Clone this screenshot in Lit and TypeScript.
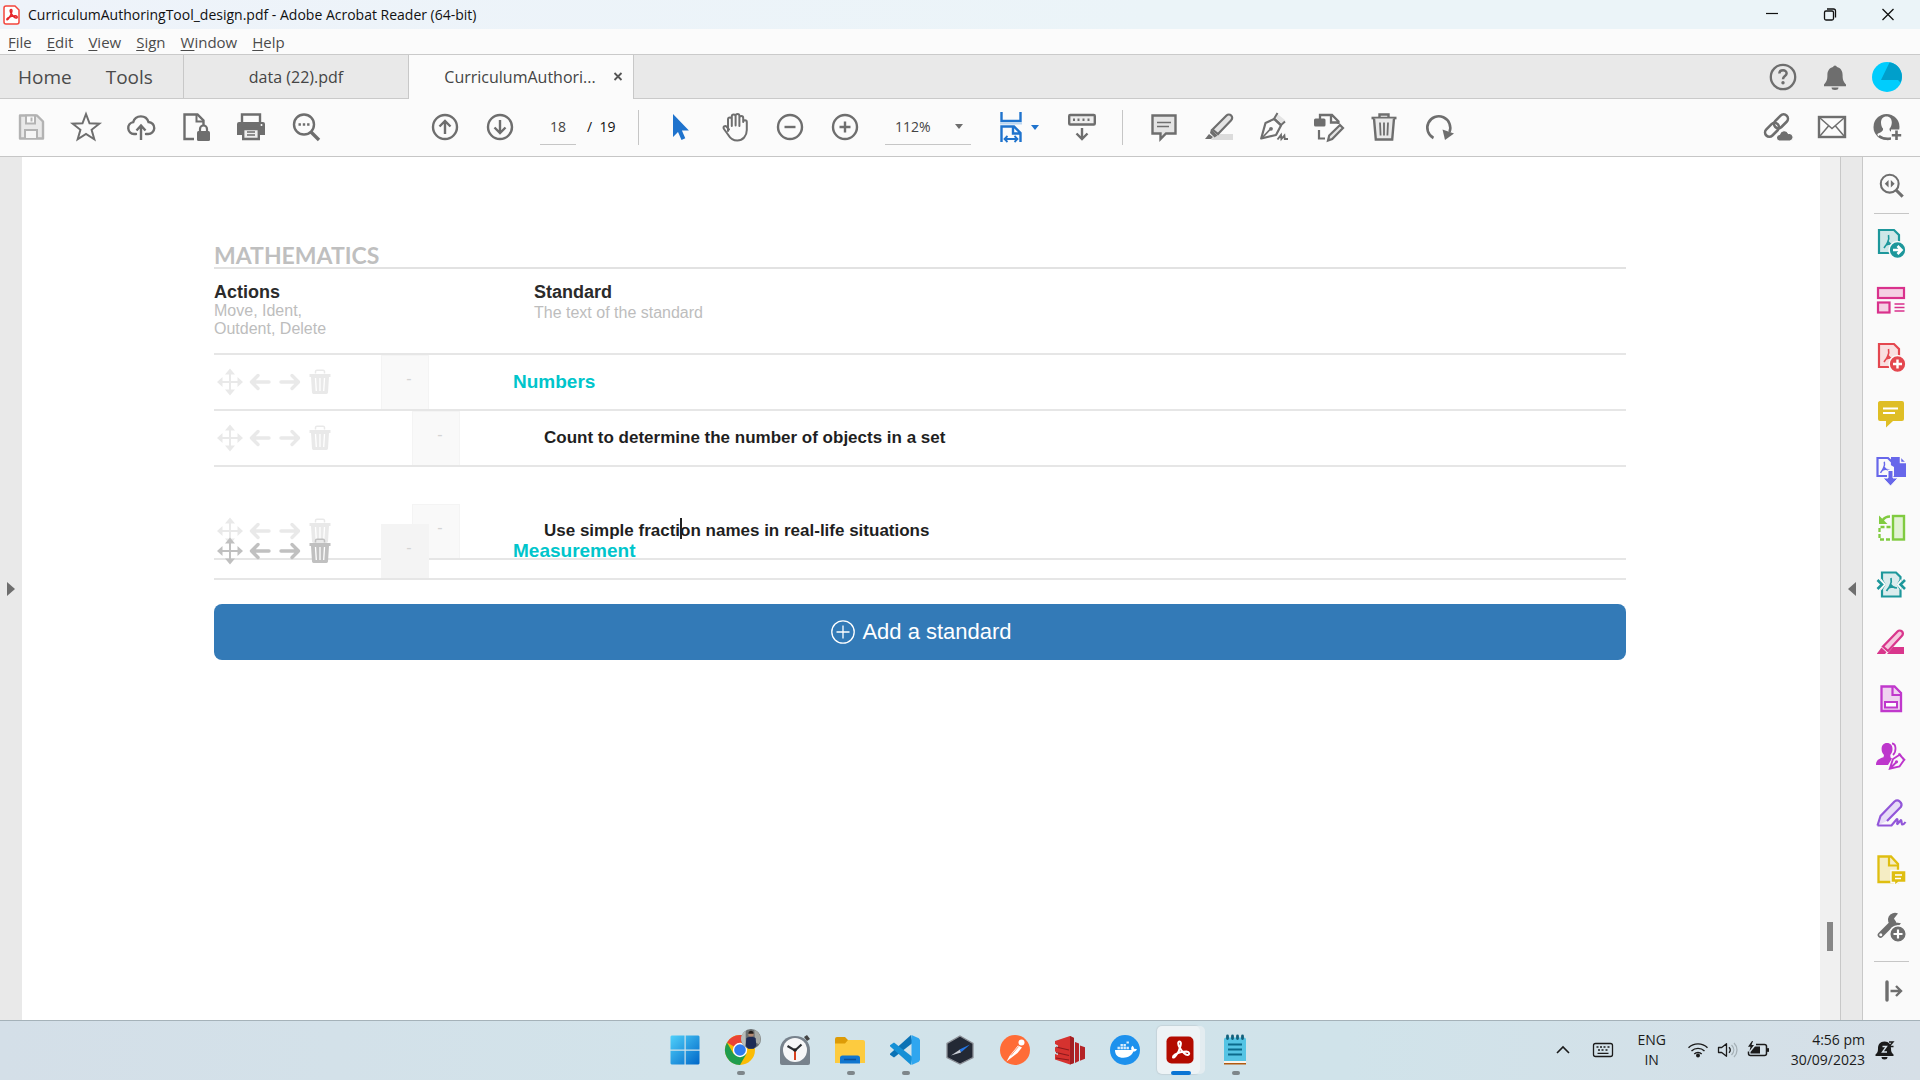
import { LitElement, html, svg, css, TemplateResult } from "lit";
import { customElement } from "lit/decorators.js";
import { classMap } from "lit/directives/class-map.js";

const icon = (body: TemplateResult, size = "i30") =>
  html`<svg class="ico ${size}" viewBox="0 0 30 30" aria-hidden="true">${body}</svg>`;

// The three-lobed Acrobat mark, drawn inside a 30 unit box.
const LOBES =
  "M14.5 7.5c-1.6 0-1.4 2.400 0 4.700s4.200 6 6.300 6 1.700-2.700-.8-2.800c-3 0-6.800.9-9.300 2.600s-1.700 3.500.3 1.300c1.800-2 3.900-6.700 4.400-9.200.3-1.600 0-2.600-.9-2.600z";

// Open three-armed form of the mark, used at small sizes.
const ARMS = "M14.500 8c.8 3 .2 5-1 7.500S11 19.500 10 21M13.800 14c1 2 3 3.600 6.700 4M12 18c2-1 4.500-1.300 6-1";

const G = "#6e6e6e";

const I: Record<string, TemplateResult> = {
  save: svg`<path d="M4 3.500h17l6 6v17H4z" fill="#e9e9e9" stroke="#b3b3b3" stroke-width="2.400" stroke-linejoin="round"/><path d="M10 3.500h9v8h-9z" fill="#fbfbfb" stroke="#b3b3b3" stroke-width="2"/><path d="M15.500 5.500v4" stroke="#b3b3b3" stroke-width="2"/><path d="M9 26v-8h12v8" fill="#f6f6f6" stroke="#b3b3b3" stroke-width="2"/>`,
  star: svg`<path d="M15 2l3.500 9.300 9.800.4-7.700 6.100 2.700 9.500L15 21.900l-8.300 5.400 2.700-9.500-7.700-6.100 9.800-.4z" fill="none" stroke="${G}" stroke-width="2"/>`,
  cloud: svg`<path d="M10 22H8a6 6 0 0 1-.8-11.900A8 8 0 0 1 22.500 10 6 6 0 0 1 22 22h-2" fill="none" stroke="${G}" stroke-width="2.400" stroke-linecap="round"/><path d="M15 28V14M10.500 18.500L15 13.500l4.500 5" fill="none" stroke="${G}" stroke-width="2.400"/>`,
  lockfile: svg`<path d="M13 27H3.500V2.500h13l6 6V14" fill="none" stroke="${G}" stroke-width="2.400"/><path d="M15.500 2.500v7h7" fill="none" stroke="${G}" stroke-width="2"/><rect x="16" y="19" width="13" height="10" rx="1.500" fill="${G}"/><path d="M19 20v-3a3.500 3.500 0 0 1 7 0v3" fill="none" stroke="${G}" stroke-width="2.200"/>`,
  print: svg`<path d="M6 10V2.500h18V10" fill="none" stroke="${G}" stroke-width="2.400"/><path d="M3 10h24a2 2 0 0 1 2 2v11h-5v-6H6v6H1V12a2 2 0 0 1 2-2z" fill="${G}"/><path d="M7.200 17h15.600v10H7.200z" fill="#eee" stroke="${G}" stroke-width="2.400"/><path d="M11 20h8M11 23h8" stroke="${G}" stroke-width="1.500"/><circle cx="25.500" cy="13" r="1" fill="#fff"/>`,
  search: svg`<circle cx="13" cy="12.500" r="10" fill="none" stroke="${G}" stroke-width="2.400"/><path d="M20 20l8 8" stroke="${G}" stroke-width="3.400"/><path d="M7.500 12.500h2.400M11.800 12.500h2.400M16.100 12.500h2.400" stroke="${G}" stroke-width="2.400"/>`,
  up: svg`<circle cx="15" cy="15" r="12" fill="none" stroke="${G}" stroke-width="2.400"/><path d="M15 22V9M9.500 14.500L15 9l5.500 5.500" fill="none" stroke="${G}" stroke-width="2.400"/>`,
  down: svg`<circle cx="15" cy="15" r="12" fill="none" stroke="${G}" stroke-width="2.400"/><path d="M15 8v13M9.500 15.500L15 21l5.500-5.500" fill="none" stroke="${G}" stroke-width="2.400"/>`,
  cursor: svg`<path d="M8 2v23l5-5 3.500 8 3.800-1.700-3.400-7.700h7z" fill="#1f73cd"/>`,
  hand: svg`<path d="M8.500 19V7.500a1.900 1.900 0 0 1 3.800 0V14 4.500a1.900 1.900 0 0 1 3.800 0V13.500 3.800a1.900 1.900 0 0 1 3.800 0V14 6a1.900 1.900 0 0 1 3.800 0v4a1.800 1.800 0 0 1 3.600 0v8c0 6-4 10.500-9.500 10.500-4.500 0-7-2-9-5.500l-4.300-6c-1.600-2.300 1.200-3.900 2.700-2.200l2.300 2.700" transform="translate(-.5)" fill="#fbfbfb" stroke="${G}" stroke-width="2" stroke-linejoin="round" stroke-linecap="round"/>`,
  minus: svg`<circle cx="15" cy="15" r="12" fill="none" stroke="${G}" stroke-width="2.400"/><path d="M9.500 15h11" stroke="${G}" stroke-width="2.400"/>`,
  plus: svg`<circle cx="15" cy="15" r="12" fill="none" stroke="${G}" stroke-width="2.400"/><path d="M9.500 15h11M15 9.500v11" stroke="${G}" stroke-width="2.400"/>`,
  fit: svg`<path d="M5.500 0v9h19V0" fill="none" stroke="#1f73cd" stroke-width="2.400"/><path d="M4 11.500h22" stroke="#bcd6f0" stroke-width="2"/><path d="M5.500 30V14.500H18l6.500 6.500v9M17 15v6.500h7" fill="none" stroke="#1f73cd" stroke-width="2.400"/><path d="M8.500 27h13M11.500 24l-3 3 3 3M18.500 24l3 3-3 3" fill="none" stroke="#1f73cd" stroke-width="1.800"/>`,
  keys: svg`<rect x="2.200" y="3" width="25.600" height="9.500" rx="1" fill="#eee" stroke="${G}" stroke-width="2.400"/><path d="M6 7.700h2M10.500 7.700h2M15.500 7.700h2M20.500 7.700h2" stroke="${G}" stroke-width="2.600"/><path d="M15 16v11M9.500 21.500L15 27l5.500-5.500" fill="none" stroke="${G}" stroke-width="2.400"/>`,
  comment: svg`<path d="M3.500 3.500h23v18H17l-5.500 5.500v-5.500h-8z" fill="#e4e4e4" stroke="${G}" stroke-width="2.400"/><path d="M8 10.500h14M8 14.500h12" stroke="${G}" stroke-width="1.600"/>`,
  highlight: svg`<path d="M12 22h17v6H7z" fill="#dcdcdc"/><path d="M8.500 17.500L22.500 3.500a3.300 3.300 0 0 1 4.700 4.700L14 22z" fill="#e4e4e4" stroke="${G}" stroke-width="2.200"/><path d="M7 17l6.500 6.500-3 2L6 21z" fill="${G}"/><path d="M1 27l4-5 4 3-2 2z" fill="${G}"/>`,
  sign: svg`<path d="M15.500 4.500L18 1.500l8.500 7-4 3z" fill="#e4e4e4"/><path d="M18.500 1l-3.300 5.500 7 6.500L26 9.500" fill="none" stroke="${G}" stroke-width="2"/><path d="M15 7l-8.500 4L2.200 26.500 17 23l5-9.500z" fill="none" stroke="${G}" stroke-width="2.200" stroke-linejoin="round"/><path d="M3 26l8-8.500" stroke="${G}" stroke-width="1.800"/><circle cx="12" cy="16.800" r="1.900" fill="${G}"/><path d="M18.500 27.500l3.500-4.500.4 4 3-3.500.4 3.500H29" fill="none" stroke="${G}" stroke-width="1.900"/>`,
  edit: svg`<path d="M6 8V3h12l6.500 6.500V12M17 3v7.500h7" fill="none" stroke="${G}" stroke-width="2.300"/><rect x="0" y="6.500" width="11.500" height="8" rx="1.500" fill="${G}"/><path d="M5 18v8.500h6" fill="none" stroke="${G}" stroke-width="2.200"/><path d="M14 28.500l1.200-5L26 13l3 3-10.800 11z" fill="#e4e4e4" stroke="${G}" stroke-width="2.200"/>`,
  trash: svg`<path d="M2.500 6h25" stroke="${G}" stroke-width="2.600"/><path d="M10.500 6V2.500h9V6" fill="none" stroke="${G}" stroke-width="2.400"/><path d="M5 6.500l1.800 21h16.400L25 6.500" fill="#e9e9e9" stroke="${G}" stroke-width="2.400"/><path d="M11 10.500l.6 13M15 10.500v13M19 10.500l-.6 13" stroke="${G}" stroke-width="1.800"/>`,
  rotate: svg`<path d="M9.500 26A11.500 11.500 0 1 1 25.500 20" fill="none" stroke="${G}" stroke-width="2.600"/><path d="M18.500 17.500l11.500 4-9 6.500z" fill="${G}"/>`,
  link: svg`<g fill="none" stroke="${G}" stroke-width="2.600"><rect x="11" y="5" width="16" height="8.600" rx="4.300" transform="rotate(-45 19 9.300)"/><rect x="2" y="13.500" width="16" height="8.600" rx="4.300" transform="rotate(-45 10 17.800)"/></g><path d="M17 29a3.400 3.400 0 0 1 .5-6.700 4.800 4.800 0 0 1 9-.8A3.800 3.800 0 0 1 28 29z" fill="${G}" stroke="#fbfbfb" stroke-width="1.200"/>`,
  mail: svg`<rect x="2" y="5" width="26" height="20" fill="none" stroke="${G}" stroke-width="2.400"/><path d="M3 6l12 10.500L27 6M3 24l8.500-10M27 24l-8.500-10" fill="none" stroke="${G}" stroke-width="1.500"/>`,
  adduser: svg`<circle cx="14.500" cy="15" r="13" fill="${G}"/><path d="M14.500 4.500c3.600 0 5.300 2.600 5.300 6 0 2.600-1 4.700-2.200 6-.4 2 .4 3 4.400 4.500 1.500.6 1 3-1 4.500H9c-3-1.500-4.500-2.800-3-4 3.500-1.500 5.500-2.600 5-5-1.200-1.300-2-3.400-2-6 0-3.400 1.900-6 5.500-6z" fill="#fbfbfb"/><path d="M7 24c5 3.500 9 3.500 12 2.500" fill="none" stroke="${G}" stroke-width="2.200"/><path d="M19 17.500h11v12H19z" fill="#fbfbfb"/><path d="M24.500 18.500v9.500M19.800 23.200h9.400" stroke="${G}" stroke-width="2.600"/>`,
  help: svg`<circle cx="15" cy="15" r="12.200" fill="none" stroke="${G}" stroke-width="2.300"/><path d="M11.300 11.500c.2-4.300 7.500-4.200 7.300 0-.1 2.600-3.600 2.600-3.600 5.700" fill="none" stroke="${G}" stroke-width="2.500"/><circle cx="15" cy="20.800" r="1.700" fill="${G}"/>`,
  bell: svg`<path d="M15 3.500a2.200 2.200 0 0 1 2 1.500c3.600 1 5.600 3.800 5.600 8 0 5 .8 6.500 3.400 9.500v1.700H4v-1.700c2.600-3 3.400-4.500 3.400-9.500 0-4.200 2-7 5.600-8a2.200 2.200 0 0 1 2-1.500z" fill="${G}"/><path d="M11.500 25.500h7a3.500 2.500 0 0 1-7 0z" fill="${G}"/>`,
  avatar: svg`<circle cx="15" cy="15" r="15" fill="#00cdfd"/><path d="M17.500.5C27 1.500 33 12 28.500 20.500L26 18H9z" fill="#009fcb"/>`,
  loupe: svg`<circle cx="13.500" cy="13.500" r="10.300" fill="none" stroke="${G}" stroke-width="2.400"/><path d="M20.500 20.500l8 8" stroke="${G}" stroke-width="3.600"/><path d="M12.200 9.200v8.600l-4.400-4.300zM14.800 9.200v8.600l4.400-4.300z" fill="${G}"/>`,
  export: svg`<path d="M3 2h15l5 5v18H3z" fill="#cfe7e8" stroke="#1d979b" stroke-width="2.200"/><path d="${ARMS}" transform="translate(-2 -1)" fill="none" stroke="#1d979b" stroke-width="1.600"/><circle cx="21.500" cy="22" r="8.400" fill="#1d979b" stroke="#fafafa" stroke-width="1.500"/><path d="M17 22h8M21.500 18l4 4-4 4" fill="none" stroke="#fff" stroke-width="2.600"/>`,
  organize: svg`<g fill="#f5d0e4" stroke="#d9318c" stroke-width="2.200"><rect x="2" y="3" width="26" height="10"/><rect x="2" y="17.500" width="11.500" height="10"/></g><path d="M18.500 19h10M18.500 22.500h10M18.500 26h10" stroke="#d9318c" stroke-width="1.300"/>`,
  create: svg`<path d="M3 2h15l5 5v18H3z" fill="#f9dfe0" stroke="#e4474f" stroke-width="2.200"/><path d="${ARMS}" transform="translate(-2 -1)" fill="none" stroke="#e4474f" stroke-width="1.600"/><circle cx="21.500" cy="22" r="8.400" fill="#e4474f" stroke="#fafafa" stroke-width="1.500"/><path d="M17 22h9M21.500 17.500v9" stroke="#fff" stroke-width="2.400"/>`,
  note: svg`<path d="M4 2h22a2 2 0 0 1 2 2v16a2 2 0 0 1-2 2h-9l-7 6.500V22H4a2 2 0 0 1-2-2V4c0-1 .8-2 2-2z" fill="#dfbe25"/><path d="M7 9.500h15M7 14h12" stroke="#fff" stroke-width="2"/>`,
  combine: svg`<path d="M15 1h9l6 6v14H15z" fill="#6767ea"/><path d="M24.500 1v5.500H30" fill="none" stroke="#fafafa" stroke-width="1.500"/><path d="M11 20H1.500V2H12l4 4v9" fill="#fafafa" stroke="#6767ea" stroke-width="2.200"/><path d="M13 8l5 3v9h-5z" fill="#fafafa"/><path d="${ARMS}" transform="translate(-4 -1) scale(.85)" fill="none" stroke="#6767ea" stroke-width="1.700"/><path d="M12 14.500h5V22h5l-7.500 8L7 22h5z" fill="#6767ea" stroke="#fafafa" stroke-width="1"/>`,
  swap: svg`<rect x="17" y="3" width="11" height="23.500" fill="#e2f2d4" stroke="#80cb40" stroke-width="2.400"/><path d="M14 3.500C10 3.500 8 5 6.500 7.500" fill="none" stroke="#80cb40" stroke-width="2.500"/><path d="M3 2.500V11h8.500z" fill="#80cb40"/><path d="M14.500 14H3.500v12.500h11" fill="none" stroke="#80cb40" stroke-width="2.300" stroke-dasharray="4 2"/>`,
  compress: svg`<path d="M6 10V2.500h14L24.500 7v3l-2.500 4.500 2.500 4.500v7.500H6V19l2.500-4.500z" fill="#dbeced" stroke="#1d979b" stroke-width="2.200"/><path d="M5 8.500l5 6-5 6zM25.500 8.500l-5 6 5 6z" fill="#fafafa"/><path d="${ARMS}" transform="translate(.5 0)" fill="none" stroke="#1d979b" stroke-width="1.700"/><path d="M1.500 10l4.500 4.500L1.500 19M29 10l-4.500 4.500L29 19" fill="none" stroke="#1d979b" stroke-width="2.600"/>`,
  redact: svg`<path d="M17 20h11v7H11z" fill="#d9368c"/><path d="M7 19.500L21.500 4.500a3 3 0 0 1 4.500 4.300L12 24z" fill="#f6c9df" stroke="#d9368c" stroke-width="2.300"/><path d="M1 26.500l4.500-6 5 4.700-1.500 1.800H1z" fill="#d9368c"/>`,
  form: svg`<path d="M5.500 2.500h13l6.500 6.500v18H5.500z" fill="#efd3f0" stroke="#c038cc" stroke-width="2.300"/><path d="M16.500 3v8H25" fill="#efd3f0" stroke="#c038cc" stroke-width="2.200"/><rect x="9" y="18" width="12" height="5.500" fill="#fff" stroke="#c038cc" stroke-width="2"/>`,
  request: svg`<path d="M11 2c3.500 0 5.500 2.500 5.500 6 0 2.800-1 4.600-2.200 6l.2 2.500 1.500 1-4 6.500H0c0-4.500 2-6 7.500-7.800L8 14c-1.400-1.400-2.400-3.200-2.400-6 0-3.500 1.900-6 5.400-6z" fill="#bd36cc"/><path d="M16 2.500c4.500.5 4.500 8 1 11.500" fill="none" stroke="#bd36cc" stroke-width="1.800"/><path d="M24 13.500l-7 4.500-3.200 9.700 9.700-2.200 4.500-6.500zM14 27.500l6-6M22.500 12.500l6.500 7" fill="#fafafa" stroke="#bd36cc" stroke-width="1.900"/><circle cx="20.500" cy="20.800" r="1.600" fill="#bd36cc"/>`,
  fill: svg`<path d="M1.500 27.500l3-9.500L18.500 3.500a4.300 4.300 0 0 1 6.500 5.300L11 23" fill="#e7dcf7" stroke="#9256d9" stroke-width="2.200" stroke-linejoin="round"/><path d="M1.500 27.500h14l5-6c1-1 1.500 1 .5 5l4-4.500c1 0 0 4.500 1.500 4.500 1 0 2-1 3-2.500" fill="none" stroke="#9256d9" stroke-width="2.200"/>`,
  send: svg`<path d="M2.500 1.500h12.500l7 7.500v18H2.500z" fill="#f5edc4" stroke="#dfbe10" stroke-width="2.300"/><path d="M13 2v8.500h8.500" fill="none" stroke="#dfbe10" stroke-width="2.200"/><path d="M15 15.500h15v12h-7.500l-4 3v-3H15z" fill="#dfbe10" stroke="#fafafa" stroke-width="1.400"/><path d="M19 20h7M19 23.500h6" stroke="#fff" stroke-width="1.500"/>`,
  tools: svg`<path d="M4.500 23L17 10.500" stroke="${G}" stroke-width="5.600" stroke-linecap="round"/><path d="M22 1.500a7 7 0 1 0 3 9.800l-5-.8-2-4z" fill="${G}"/><circle cx="4.800" cy="22.700" r="1.500" fill="#fafafa"/><circle cx="22" cy="22" r="8.300" fill="${G}" stroke="#fafafa" stroke-width="1.500"/><path d="M17.500 22h9M22 17.500v9" stroke="#fff" stroke-width="2.200"/>`,
  collapse: svg`<path d="M11 6v18" stroke="${G}" stroke-width="3.400" stroke-linecap="round"/><path d="M14.500 15H25M20 10l5 5-5 5" fill="none" stroke="${G}" stroke-width="2.400"/>`,
  move: svg`<path d="M15 4v22M4 15h22" stroke="currentColor" stroke-width="2"/><path d="M15 1.500l5 6H10zM15 28.500l5-6H10zM2 15l5.500-5v10zM28 15l-5.500-5v10z" fill="currentColor"/>`,
  left: svg`<path d="M24 15H6.500M13 8.500L6.500 15l6.500 6.500" fill="none" stroke="currentColor" stroke-width="3.400" stroke-linecap="round" stroke-linejoin="round"/>`,
  right: svg`<path d="M6 15h17.500M17 8.500l6.500 6.500-6.500 6.500" fill="none" stroke="currentColor" stroke-width="3.400" stroke-linecap="round" stroke-linejoin="round"/>`,
  bin: svg`<path d="M10.500 6.500v-2a1.400 1.400 0 0 1 1.400-1.300h6.200a1.400 1.400 0 0 1 1.400 1.300v2" fill="none" stroke="currentColor" stroke-width="1.500"/><path d="M4.500 7h21v3h-1.500L23 25.500a1.500 1.500 0 0 1-1.500 1.400h-13A1.500 1.500 0 0 1 7 25.500L6 10H4.500z" fill="currentColor"/><path d="M10.500 11l.8 13M15 11v13M19.500 11l-.8 13" stroke="#fff" stroke-width="1.300"/>`,
  add: svg`<circle cx="15" cy="15" r="11.200" fill="none" stroke="#fff" stroke-width="1.300"/><path d="M8.500 15h13M15 8.500v13" stroke="#fff" stroke-width="1.300"/>`,
  min: svg`<path d="M9 13.500h12" stroke="#111" stroke-width="1.200"/>`,
  restore: svg`<rect x="9.500" y="11" width="9" height="9" rx="1.500" fill="none" stroke="#111" stroke-width="1.300"/><path d="M12 9h6.500a2 2 0 0 1 2 2v6.500" fill="none" stroke="#111" stroke-width="1.300"/>`,
  close: svg`<path d="M9.500 9l11 11M20.500 9l-11 11" stroke="#111" stroke-width="1.300"/>`,
  win: svg`<defs><linearGradient id="w" x1="0" y1="0" x2="1" y2="1"><stop offset="0" stop-color="#4fd0fa"/><stop offset="1" stop-color="#0067c8"/></linearGradient></defs><path d="M1.500.5H14.500V14.500H.5V1.500zM15.700 .5h12.800l1 1V14.500H15.700zM.5 15.700H14.500v13.800H1.500l-1-1zM15.700 15.700h13.800v12.800l-1 1H15.700z" fill="url(#w)"/>`,
  chrome: svg`<circle cx="15" cy="15" r="15" fill="#fbbc05"/><path d="M15 15L2 7.500A15 15 0 0 1 28 7.500H15z" fill="#ea4335"/><path d="M2 7.500A15 15 0 0 0 15 30l6.500-11.200L15 15l-6.500 3.800z" fill="#1f9d4e"/><path d="M28 7.500H15v7z" fill="#ea4335"/><circle cx="15" cy="15" r="7.200" fill="#fff"/><circle cx="15" cy="15" r="5.800" fill="#2f7cf0"/>`,
  photo: svg`<circle cx="15" cy="15" r="15" fill="#6b6f70"/><path d="M0 15A15 15 0 0 1 7 2.500V27A15 15 0 0 1 0 15z" fill="#b8bdbb"/><path d="M20 1a15 15 0 0 1 7 22l-6-3z" fill="#a7aaa6"/><circle cx="15" cy="8" r="4" fill="#b38a72"/><path d="M11 7c0-6 8-6 8 0z" fill="#241d1b"/><path d="M8 14c3-3 11-3 14 0l1 11-4 4.500h-8L7 25z" fill="#1e2b55"/>`,
  clock: svg`<path d="M0 15C0 7 6 1 15 1s15 6 15 14v13a2 2 0 0 1-2 2H2a2 2 0 0 1-2-2z" fill="#77828c"/><path d="M24 2l3-2 3 4-3 2z" fill="#444"/><circle cx="15" cy="15" r="12" fill="#f6f7f8"/><path d="M7.500 11L15 15.500l6.500-6" fill="none" stroke="#2b2f33" stroke-width="2.200"/><path d="M15 16v9" stroke="#d8421f" stroke-width="2"/><circle cx="15" cy="15" r="1.800" fill="#222"/>`,
  folder: svg`<path d="M0 4a2 2 0 0 1 2-2h8l3 3h3v6H0z" fill="#dd9b07"/><path d="M0 8.500h10L13 5h15a2 2 0 0 1 2 2v21H0z" fill="#fdcb3f"/><path d="M5 28.500V23a2.500 2.500 0 0 1 2.500-2.500h15A2.500 2.500 0 0 1 25 23v5.500z" fill="#1176cf"/><path d="M9 24.500h12" stroke="#0b4f96" stroke-width="1.500"/>`,
  code: svg`<path d="M22.500 8L4 22.500 0 19.800v-1L21 0z" fill="#0b72b5"/><path d="M22.500 22L4 7.500 0 10.200v1L21 30z" fill="#1590d6"/><path d="M21.500 0l7.300 3.200L30 5v20l-1.200 1.800L21.500 30z" fill="#2fa6ef"/>`,
  hex: svg`<path d="M15 1l13 7.500v14L15 29 2 22.500v-14z" fill="#232935" stroke="#8b8f96" stroke-width="1.300"/><path d="M6 20.500l9-6 1 3z" fill="#c9ced6"/><path d="M14.500 14.500L25 9.500 16.500 17z" fill="#2478e8"/>`,
  postman: svg`<circle cx="15" cy="15" r="15" fill="#ff6c37"/><circle cx="21.500" cy="7.500" r="3" fill="#fff"/><path d="M18 10.500l4 2-4.500 5.500-6.500 5-4.500 3.500 3-5.500z" fill="#fff"/><path d="M18.500 11.500l-7.500 9" stroke="#ff9b78" stroke-width="1"/>`,
  redis: svg`<path d="M15 1l4 2v25l-4 1.500L0 24.500V19l3 1v-2.500L0 16.500V12l3 1v-2.500L0 9V6z" fill="#d6322f"/><path d="M15 1l4 2v25l-4 1.500z" fill="#a31f22"/><path d="M20 7l4 1.500v17.500L20 28zM25 10.500l5 1.800v11.500l-5 2z" fill="#b52427"/><path d="M1 12l13 3M1 17.500l13 3M1 23l13 2" stroke="#8c1a1c" stroke-width="1.200"/>`,
  docker: svg`<circle cx="15" cy="15" r="15" fill="#1d91ed"/><path d="M5 15h16.500c-.8-1.800 0-3.500 1-4.200 1.100 1 1.600 2.200 1.500 3 1.200-.2 2.200 0 3 .4-.6 1.600-1.900 2.400-3.600 2.400-1.800 4-5 6.200-9.900 6.200C8 22.800 4.900 20 5 15z" fill="#fff"/><path d="M7.500 11.800h2.400v2.400H7.500zM10.500 11.800h2.400v2.400h-2.400zM13.500 11.800h2.400v2.400h-2.400zM16.500 11.800h2.400v2.400h-2.400zM10.500 9h2.400v2.300h-2.400zM13.500 9h2.400v2.300h-2.400zM16.500 6.500h2.400v2h-2.400z" fill="#d9edfc"/>`,
  acrobat: svg`<rect x="1.500" y="1.500" width="27" height="27" rx="5" fill="#b30b00"/><path d="${LOBES}" transform="translate(-3.500 -2.800) scale(1.250)" fill="none" stroke="#fff" stroke-width="1.600"/>`,
  notes: svg`<path d="M4 28h22v1.500H4z" fill="#b05a10"/><path d="M4 26h22v2H4z" fill="#f7f3ec"/><path d="M6 2.500h18a2 2 0 0 1 2 2V26H4V4.500a2 2 0 0 1 2-2z" fill="#55c4e4"/><path d="M8 9.500h14M8 14.500h14M8 19.500h14" stroke="#0c6a8c" stroke-width="1.800"/><path d="M7.500 1v2.500M12.500 1v2.500M17.500 1v2.500M22.500 1v2.500" stroke="#12607c" stroke-width="2.800" stroke-linecap="round"/>`,
  chevron: svg`<path d="M9 18l6-6 6 6" fill="none" stroke="#1b1b1b" stroke-width="1.600"/>`,
  kbd: svg`<rect x="5.500" y="8.500" width="19" height="13" rx="2" fill="none" stroke="#1b1b1b" stroke-width="1.300"/><path d="M8.500 12h2M12 12h2M15.500 12h2M19.500 12h2M10 15h2M13.500 15h2M17.500 15h2M9.500 18.300h11" stroke="#1b1b1b" stroke-width="1.300"/>`,
  wifi: svg`<path d="M5.500 12.800a13.500 13.500 0 0 1 19 0M8.500 16a9.300 9.300 0 0 1 13 0M11.300 19a5.300 5.300 0 0 1 7.400 0" fill="none" stroke="#1b1b1b" stroke-width="1.400"/><circle cx="15" cy="20.500" r="2" fill="#1b1b1b"/>`,
  volume: svg`<path d="M5.500 12.500h3.200l4.800-3.800v12.600l-4.800-3.800H5.500z" fill="none" stroke="#1b1b1b" stroke-width="1.300" stroke-linejoin="round"/><path d="M16 12.200c1.700 1.700 1.700 3.900 0 5.600" fill="none" stroke="#1b1b1b" stroke-width="1.300"/><path d="M18.500 10c3 3 3 7 0 10M21 8c4 4 4 10 0 14" fill="none" stroke="#a5b0b6" stroke-width="1.300"/>`,
  battery: svg`<path d="M13 9.500h8.500a2 2 0 0 1 2 2v7a2 2 0 0 1-2 2h-14a2 2 0 0 1-2-2v-2" fill="none" stroke="#1b1b1b" stroke-width="1.500"/><path d="M24.500 13.500h1v3h-1z" stroke="#1b1b1b"/><path d="M12 11.500h5v7H7.500V17z" fill="#1b1b1b"/><path d="M9 6l-4 5.800h2.500l-1 4.200 4.500-6H8.500L10 6z" fill="#1b1b1b"/>`,
  snooze: svg`<path d="M14.500 6.500c4.500 0 6.500 3 6.500 7 0 3 .5 4 2.500 6v1.500H5.500v-1.500c2-2 2.500-3 2.500-6 0-4 2-7 6.500-7zM11.500 22h6a3 2.500 0 0 1-6 0z" fill="#1b1b1b"/><path d="M12.500 11.500h4l-4 5.500h4.500" fill="none" stroke="#d5e0e7" stroke-width="1.400"/><path d="M19 7h4l-4 4.500h4.500" fill="none" stroke="#1b1b1b" stroke-width="1.400"/>`,
};

interface Row {
  text: string;
  child: boolean;
  state?: "open" | "lifted";
}

const ROWS: Row[] = [
  { text: "Numbers", child: false },
  { text: "Count to determine the number of objects in a set", child: true },
  { text: "Use simple fraction names in real-life situations", child: true, state: "open" },
  { text: "Measurement", child: false, state: "lifted" },
];

const SIDE: [string, string][] = [
  ["export", "Export PDF"], ["organize", "Edit PDF"], ["create", "Create PDF"], ["note", "Comment"],
  ["combine", "Combine files"], ["swap", "Organize pages"], ["compress", "Compress PDF"], ["redact", "Redact"],
  ["form", "Prepare form"], ["request", "Request signatures"], ["fill", "Fill and sign"],
  ["send", "Send for comments"], ["tools", "More tools"],
];

const APPS: { i: string; name: string; run?: boolean; active?: boolean }[] = [
  { i: "win", name: "Start" }, { i: "chrome", name: "Chrome", run: true }, { i: "clock", name: "Clock" },
  { i: "folder", name: "File Explorer", run: true }, { i: "code", name: "Code", run: true },
  { i: "hex", name: "Compass" }, { i: "postman", name: "Postman" }, { i: "redis", name: "Redis" },
  { i: "docker", name: "Docker" }, { i: "acrobat", name: "Acrobat Reader", active: true },
  { i: "notes", name: "Notepad", run: true },
];

@customElement("app-root")
export class AppRoot extends LitElement {
  static styles = css`
    :host { display: flex; flex-direction: column; min-height: 100vh; background: #fff; color: #444;
      font-family: "Open Sans", "Noto Sans", sans-serif; font-size: 14px; line-height: 20px; }
    * { box-sizing: border-box; }
    button, input, select { font: inherit; color: inherit; margin: 0; padding: 0; border: 0; background: none; border-radius: 0; }
    button { display: flex; align-items: center; justify-content: center; }
    h1, p { margin: 0; }
    .ico { display: block; flex: none; overflow: visible; }
    .i30 { width: 30px; height: 30px; }
    .i26 { width: 26px; height: 26px; }
    .i20 { width: 20px; height: 20px; }
    .spacer { flex: 1; }

    .title { display: flex; align-items: center; height: 29px; padding-right: 3px; background: linear-gradient(90deg, #eef3fa, #ebf4f8 60%); color: #111; }
    .title .logo { margin: 0 6px 0 2px; }
    .win { width: 58px; height: 29px; }
    .menu { display: flex; align-items: center; gap: 15px; height: 25px; padding: 0 8px; background: #fbfbfb; font-size: 15px; }
    .menu a { color: #4b4b4b; text-decoration: none; }
    .menu u { text-underline-offset: 2px; }

    .tabs { display: flex; height: 45px; background: #e9e9e9; border-top: 1px solid #cacaca; border-bottom: 1px solid #cacaca; font-size: 16px; }
    .tabs .nav { font-size: 19px; color: #4b4b4b; padding: 0 16px 0 18px; }
    .tabs .doc { width: 225px; border-left: 1px solid #c8c8c8; }
    .tabs .open { background: #fbfbfb; margin-bottom: -1px; border: 1px solid #c8c8c8; border-width: 0 1px; width: 226px; gap: 16px; padding-left: 26px; display: flex; align-items: center; justify-content: center; }
    .home { display: flex; width: 183px; }
    .acct { width: 52px; }
    .acct:last-child { margin-right: 7px; }
    .x { width: 12px; height: 12px; }

    .bar { display: flex; align-items: center; height: 58px; padding: 0 6px 1px 3px; background: #fbfbfb; border-bottom: 1px solid #c6c6c6; }
    .tool { width: 55px; height: 44px; flex: none; }
    .gap { width: 84px; }
    .page { width: 36px; height: 35px; margin: 0 11px 0 13px; text-align: center; border-bottom: 1px solid #c6c6c6; }
    .bar .of { color: #111; width: 38px; white-space: pre; }
    .sep { width: 1px; height: 35px; margin: 0 13px; background: #c6c6c6; }
    .zoom { display: flex; align-items: center; width: 86px; height: 35px; margin: 0 16px 0 13px; border-bottom: 1px solid #c6c6c6; }
    .zoom select { appearance: none; flex: 1; padding-left: 10px; height: 34px; }
    .caret { width: 0; height: 0; border: 4px solid transparent; border-top: 5px solid #6e6e6e; border-bottom: 0; margin-right: 8px; }
    .fit { gap: 5px; width: 67px; padding-left: 9px; justify-content: flex-start; }
    .fit .caret { border-top-color: #1f73cd; margin-right: 0; }

    .main { display: flex; flex: 1; }
    .rail { width: 22px; background: #e9e9e9; }
    .rail.right { width: 23px; border: 1px solid #c8c8c8; border-width: 0 1px; }
    .rail button { width: 100%; height: 100%; }
    .tri { width: 0; height: 0; border: 7px solid transparent; border-left: 8px solid #6e6e6e; border-right: 0; }
    .right .tri { border-left: 0; border-right: 8px solid #6e6e6e; }
    .scroll { display: flex; flex-direction: column; align-items: center; justify-content: flex-end; width: 20px; padding-bottom: 69px; background: #f0f0f0; }
    .thumb { width: 6px; height: 29px; background: #868686; }
    .side { display: flex; flex-direction: column; align-items: center; width: 57px; padding-right: 1px; background: #fafafa; }
    .side button { width: 56px; height: 57px; }
    .side button:first-child { height: 56px; }
    .line { width: 35px; height: 1px; background: #c6c6c6; }
    .line.low { margin-top: 6px; }

    .sheet { flex: 1; padding: 80px 194px 0 192px; font-family: "Liberation Sans", Arial, sans-serif; color: #1f1f1f; }
    .sheet h1 { font: bold 23px/32px "Lato", sans-serif; height: 32px; color: #bfbfbf; border-bottom: 2px solid #e2e2e2; padding-top: 2px; }
    table, thead, tbody { display: block; }
    .head, .row { display: grid; border-bottom: 2px solid #e6e6e6; }
    .head { grid-template-columns: 320px 1fr; height: 86px; padding-top: 13px; }
    .head th { padding: 0; text-align: left; font-size: 18px; line-height: 20px; color: #2b2b2b; }
    .head p { font-size: 16px; line-height: 18px; font-weight: normal; color: #bdbdbd; }
    .head .wide p { line-height: 22px; }
    .row { position: relative; grid-template-columns: 167px 132px 1fr; height: 56px; }
    .row td { padding: 0; }
    .row.open { margin-top: 37px; }
    .row.lifted { margin-top: -36px; }
    .acts { display: flex; align-items: center; padding-left: 1px; color: #e9e9e9; }
    .row .acts { padding-left: 1px; }
    .lifted .acts { color: #c0c0c0; }
    .grip { width: 48px; height: 54px; padding: 12px 0 0 8px; background: #f9f9f9; border: 1px solid #f4f4f4; border-bottom: 0; text-align: center; font-size: 16px; line-height: 22px; color: #d4d4d4; }
    .lifted .grip { background: #f4f4f4; }
    .label { display: flex; align-items: center; font-weight: bold; font-size: 19px; color: #00c5cb; }
    .child .grip { margin-left: 31px; }
    .child .label { padding-left: 31px; font-size: 17px; color: #1f1f1f; }
    .ibeam { position: absolute; left: 466px; top: 14px; width: 2px; height: 21px; background: #222; }
    .add { width: 100%; height: 56px; margin-top: 24px; gap: 4px; border-radius: 8px; background: #337ab7; color: #fff; font-size: 22px; line-height: 26px; }

    .task { display: flex; align-items: center; height: 60px; padding-bottom: 1px; background: linear-gradient(90deg, #d4dfe8, #d2e3ea 35%, #d0e3ea 70%, #d6dfe7); border-top: 1px solid #a5b2b9; color: #1b1b1b; }
    .wing { flex: 1; display: flex; align-items: center; justify-content: flex-end; padding-right: 20px; }
    .apps { display: flex; }
    .app { position: relative; width: 55px; height: 58px; }
    .app.active::before { content: ""; position: absolute; left: 4px; top: 5px; width: 43px; height: 48px; border-radius: 5px; background: #edf3f6; box-shadow: 5px 0 0 #e3ecf0, 0 0 1px 1px #c5d3da; }
    .app .ico { position: relative; }
    .app .ico.badge { position: absolute; left: 28px; top: 8px; }
    .run::after, .active::after { content: ""; position: absolute; left: 24px; bottom: 4px; width: 8px; height: 4px; border-radius: 2px; background: #7e868a; }
    .active::after { left: 18px; width: 20px; background: #0a74d4; }
    .tray { height: 40px; }
    .kb { margin-left: 10px; }
    .lang { width: 52px; margin: 0 5px 0 8px; text-align: center; }
    .when { text-align: right; margin-left: 18px; margin-right: 5px; }
  `;

  private tool(i: string, label: string) {
    return html`<button class="tool" aria-label=${label}>${icon(I[i])}</button>`;
  }

  private row(r: Row) {
    return html`<tr class=${classMap({ row: true, child: r.child, open: r.state === "open", lifted: r.state === "lifted" })}>
      <td class="acts">
        <button aria-label="Move">${icon(I.move)}</button><button aria-label="Outdent">${icon(I.left)}</button><button aria-label="Indent">${icon(I.right)}</button><button aria-label="Delete">${icon(I.bin)}</button>
      </td>
      <td><div class="grip">-</div></td>
      <td class="label">${r.text}${r.state === "open" ? html`<span class="ibeam"></span>` : null}</td>
    </tr>`;
  }

  render() {
    return html`
      <header class="title">
        <svg class="ico i20 logo" viewBox="0 0 20 20" aria-hidden="true"><path d="M4 1h9l4 4v12a2 2 0 0 1-2 2H4a2 2 0 0 1-2-2V3a2 2 0 0 1 2-2z" fill="#fff" stroke="#f4453c" stroke-width="1.500"/><path d=${LOBES} transform="translate(-2.500 -1.500) scale(.8)" fill="none" stroke="#e5252a" stroke-width="1.900"/></svg>
        <span>CurriculumAuthoringTool_design.pdf - Adobe Acrobat Reader (64-bit)</span>
        <span class="spacer"></span>
        <button class="win" aria-label="Minimize">${icon(I.min)}</button>
        <button class="win" aria-label="Restore">${icon(I.restore)}</button>
        <button class="win" aria-label="Close">${icon(I.close)}</button>
      </header>
      <nav class="menu">
        ${["File", "Edit", "View", "Sign", "Window", "Help"].map((m) => html`<a href="#"><u>${m[0]}</u>${m.slice(1)}</a>`)}
      </nav>
      <div class="tabs">
        <div class="home"><button class="nav">Home</button><button class="nav">Tools</button></div>
        <button class="doc">data (22).pdf</button>
        <div class="open"><button>CurriculumAuthori...</button><button class="x" aria-label="Close tab">
          <svg class="ico x" viewBox="0 0 12 12"><path d="M2.500 2l7 7M9.500 2l-7 7" stroke="#555" stroke-width="1.800"/></svg></button></div>
        <span class="spacer"></span>
        <button class="acct" aria-label="Help">${icon(I.help)}</button>
        <button class="acct" aria-label="Notifications">${icon(I.bell)}</button>
        <button class="acct" aria-label="Account">${icon(I.avatar)}</button>
      </div>
      <div class="bar">
        ${this.tool("save", "Save")}${this.tool("star", "Star")}${this.tool("cloud", "Upload")}${this.tool("lockfile", "Protect")}${this.tool("print", "Print")}${this.tool("search", "Find")}
        <span class="gap"></span>
        ${this.tool("up", "Previous page")}${this.tool("down", "Next page")}
        <input class="page" aria-label="Page number" value="18" /><span class="of">/  19</span>
        <span class="sep"></span>
        ${this.tool("cursor", "Select")}${this.tool("hand", "Pan")}${this.tool("minus", "Zoom out")}${this.tool("plus", "Zoom in")}
        <div class="zoom"><select aria-label="Zoom level"><option>112%</option></select><span class="caret"></span></div>
        <button class="tool fit" aria-label="Fit width">${icon(I.fit)}<span class="caret"></span></button>
        ${this.tool("keys", "Toolbar position")}
        <span class="sep"></span>
        ${this.tool("comment", "Comment")}${this.tool("highlight", "Highlight")}${this.tool("sign", "Sign")}${this.tool("edit", "Edit")}${this.tool("trash", "Delete")}${this.tool("rotate", "Rotate")}
        <span class="spacer"></span>
        ${this.tool("link", "Share link")}${this.tool("mail", "Send by email")}${this.tool("adduser", "Invite")}
      </div>
      <div class="main">
        <div class="rail"><button aria-label="Show navigation"><span class="tri"></span></button></div>
        <main class="sheet">
          <h1>MATHEMATICS</h1>
          <table>
            <thead>
              <tr class="head">
                <th>Actions<p>Move, Ident,<br />Outdent, Delete</p></th>
                <th class="wide">Standard<p>The text of the standard</p></th>
              </tr>
            </thead>
            <tbody>${ROWS.map((r) => this.row(r))}</tbody>
          </table>
          <button class="add">${icon(I.add)}Add a standard</button>
        </main>
        <div class="scroll"><div class="thumb"></div></div>
        <div class="rail right"><button aria-label="Hide tools"><span class="tri"></span></button></div>
        <aside class="side">
          <button aria-label="Search tools">${icon(I.loupe, "i26")}</button>
          <div class="line"></div>
          ${SIDE.map(([i, label]) => html`<button aria-label=${label}>${icon(I[i])}</button>`)}
          <div class="line low"></div>
          <button aria-label="Collapse">${icon(I.collapse)}</button>
        </aside>
      </div>
      <footer class="task">
        <div class="wing"></div>
        <div class="apps">
          ${APPS.map((a) => html`<button class=${classMap({ app: true, run: !!a.run, active: !!a.active })} aria-label=${a.name}>
            ${icon(I[a.i])}${a.i === "chrome" ? icon(I.photo, "i20 badge") : null}</button>`)}
        </div>
        <div class="wing">
          <button class="tray" aria-label="Hidden icons">${icon(I.chevron)}</button>
          <button class="tray kb" aria-label="Touch keyboard">${icon(I.kbd)}</button>
          <div class="lang">ENG<br />IN</div>
          ${icon(I.wifi)}${icon(I.volume)}${icon(I.battery)}
          <div class="when">4:56 pm<br />30/09/2023</div>
          ${icon(I.snooze)}
        </div>
      </footer>
    `;
  }
}
